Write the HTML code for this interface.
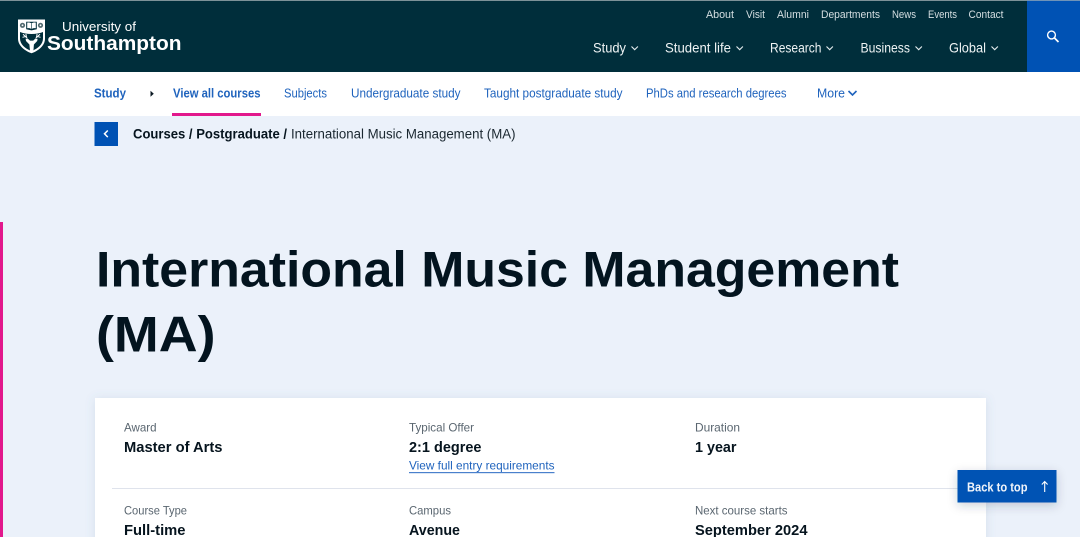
<!DOCTYPE html>
<html lang="en"><head><meta charset="utf-8"><title>International Music Management (MA)</title>
<style>
html,body{margin:0;padding:0;width:1080px;height:537px;overflow:hidden;background:#ebf1fa}
svg{display:block;position:absolute;left:0;top:0}
text{font-family:"Liberation Sans",Arial,sans-serif;white-space:pre}
.b{font-weight:700}
.tn{font-size:11px;fill:#d5dfe2}
.mn{font-size:14px;fill:#eef3f4}
.sn{font-size:12.5px;fill:#1f63bd}
.lb{font-size:12px;fill:#5a6670}
.vl{font-size:15px;font-weight:700;fill:#06141e}
</style></head><body>
<svg width="1080" height="537" viewBox="0 0 1080 537" xmlns="http://www.w3.org/2000/svg">
<defs><filter id="s" x="-20%" y="-20%" width="140%" height="140%"><feDropShadow dx="0" dy="1" stdDeviation="5" flood-color="#5a78a0" flood-opacity=".16"/></filter>
<filter id="s2" x="-30%" y="-50%" width="160%" height="200%"><feDropShadow dx="0" dy="3" stdDeviation="5" flood-color="#1a3050" flood-opacity=".22"/></filter></defs>
<rect width="1080" height="537" fill="#ebf1fa"/>
<!-- header -->
<rect width="1080" height="72" fill="#002e3b"/>
<rect width="1027" height="1" fill="#7d9298"/>
<rect x="1027" width="53" height="72" fill="#0052b4"/>
<rect x="1027" width="53" height="1" fill="#6f93b8"/>
<!-- logo: white shield -->
<path d="M18 19.500h27v19c0 7.200-6.500 12.200-13.500 14.800C24.500 50.700 18 45.700 18 38.500z" fill="#fff"/>
<!-- dark shield field under the chief -->
<path d="M20 32c3.200 1.400 7.200 2 11.500 2s8.300-.6 11.500-2v6.500c0 5.800-5 10-11.500 12.600C25 48.500 20 44.300 20 38.500z" fill="#002e3b"/>
<!-- stag -->
<path d="M30 51l-.6-6.500-3.400-3.500-.4-2.300 2.800.4 1.600 1.500h3.200l1.600-1.500 2.800-.4-.4 2.300-3.300 3.500-.4 5.500-1.700 1.600z" fill="#fff"/>
<path d="M27.500 38.500l-4.500-4.200M25.500 36.500l-3 .8M26.500 37.200l-.6-3.200M35.500 38.500l4.500-4.200M37.500 36.500l3 .8M36.500 37.200l.6-3.200" stroke="#fff" stroke-width="1" fill="none"/>
<!-- chief: book and roses -->
<path d="M26.200 21.800h10.600v7.500l-5.300 1.100-5.300-1.100z" fill="#002e3b"/>
<path d="M27.200 22.600c1.500-.3 3-.1 4.300.7c1.300-.8 2.800-1 4.300-.7v5.700c-1.500-.3-3-.1-4.300.7c-1.300-.8-2.800-1-4.300-.7z" fill="#fff"/>
<path d="M31.500 23.300v5.700" stroke="#002e3b" stroke-width=".6"/>
<circle cx="22.500" cy="25.300" r="2.600" fill="#50696f"/><circle cx="40.500" cy="25.300" r="2.600" fill="#50696f"/>
<circle cx="22.500" cy="25.300" r=".9" fill="#fff"/><circle cx="40.500" cy="25.300" r=".9" fill="#fff"/>
<text x="62" y="31" font-size="13" fill="#fff" textLength="74" lengthAdjust="spacingAndGlyphs">University of</text>
<text x="47" y="50" font-size="20" class="b" fill="#fff" textLength="134.500" lengthAdjust="spacingAndGlyphs">Southampton</text>
<!-- top nav -->
<text class="tn" x="706" y="18" textLength="28" lengthAdjust="spacingAndGlyphs">About</text>
<text class="tn" x="746" y="18" textLength="19" lengthAdjust="spacingAndGlyphs">Visit</text>
<text class="tn" x="777" y="18" textLength="32" lengthAdjust="spacingAndGlyphs">Alumni</text>
<text class="tn" x="821" y="18" textLength="59" lengthAdjust="spacingAndGlyphs">Departments</text>
<text class="tn" x="892" y="18" textLength="24" lengthAdjust="spacingAndGlyphs">News</text>
<text class="tn" x="928" y="18" textLength="29" lengthAdjust="spacingAndGlyphs">Events</text>
<text class="tn" x="968.500" y="18" textLength="35" lengthAdjust="spacingAndGlyphs">Contact</text>
<!-- main nav -->
<text class="mn" x="593" y="52.500" textLength="33" lengthAdjust="spacingAndGlyphs">Study</text>
<text class="mn" x="665" y="52.500" textLength="66" lengthAdjust="spacingAndGlyphs">Student life</text>
<text class="mn" x="770" y="52.500" textLength="51.500" lengthAdjust="spacingAndGlyphs">Research</text>
<text class="mn" x="860.500" y="52.500" textLength="49.500" lengthAdjust="spacingAndGlyphs">Business</text>
<text class="mn" x="949" y="52.500" textLength="37" lengthAdjust="spacingAndGlyphs">Global</text>
<g fill="none" stroke="#e4ecee" stroke-width="1.100">
<path d="M631.500 46.500l3.200 3.200 3.200-3.200"/><path d="M736.500 46.500l3.200 3.200 3.200-3.200"/><path d="M826.500 46.500l3.200 3.200 3.200-3.200"/><path d="M915.500 46.500l3.200 3.200 3.200-3.200"/><path d="M991.500 46.500l3.200 3.200 3.200-3.200"/>
</g>
<!-- search -->
<circle cx="1051.500" cy="35" r="3.900" fill="none" stroke="#fff" stroke-width="1.400"/>
<path d="M1054.500 38l4 4" stroke="#fff" stroke-width="1.700"/>
<!-- sub nav -->
<rect y="72" width="1080" height="44" fill="#fff"/>
<text class="sn b" x="94" y="97.500" textLength="32" lengthAdjust="spacingAndGlyphs" fill="#0f56b3">Study</text>
<path d="M150.500 90.800l3.300 3-3.300 3z" fill="#0c1a24"/>
<text class="sn b" x="173" y="97.500" textLength="87.500" lengthAdjust="spacingAndGlyphs">View all courses</text>
<rect x="172" y="113" width="89" height="3" fill="#e2188c"/>
<text class="sn" x="284" y="97.500" textLength="43" lengthAdjust="spacingAndGlyphs">Subjects</text>
<text class="sn" x="351" y="97.500" textLength="109.500" lengthAdjust="spacingAndGlyphs">Undergraduate study</text>
<text class="sn" x="484" y="97.500" textLength="138.500" lengthAdjust="spacingAndGlyphs">Taught postgraduate study</text>
<text class="sn" x="646" y="97.500" textLength="140.500" lengthAdjust="spacingAndGlyphs">PhDs and research degrees</text>
<text class="sn" x="817" y="97.500" textLength="28" lengthAdjust="spacingAndGlyphs">More</text>
<path d="M848.500 91l4 4 4-4" fill="none" stroke="#1f63bd" stroke-width="1.600"/>
<!-- breadcrumb -->
<rect x="94.500" y="122" width="23.500" height="24" fill="#0052b4"/>
<path d="M107.800 130.500l-3.300 3.300 3.300 3.300" fill="none" stroke="#fff" stroke-width="1.500"/>
<text x="133" y="138.500" font-size="13.500" class="b" fill="#06141e" textLength="154" lengthAdjust="spacingAndGlyphs">Courses / Postgraduate /</text>
<text x="291" y="138.500" font-size="13.500" fill="#1a2730" textLength="224.500" lengthAdjust="spacingAndGlyphs">International Music Management (MA)</text>
<!-- hero -->
<path d="M0 222h3v315H0z" fill="#e2188c"/>
<text x="96" y="286.500" font-size="50" class="b" fill="#03141f" textLength="803" lengthAdjust="spacingAndGlyphs">International Music Management</text>
<text x="96" y="351.500" font-size="50" class="b" fill="#03141f" textLength="119.500" lengthAdjust="spacingAndGlyphs">(MA)</text>
<!-- card -->
<rect x="95" y="398" width="891" height="160" fill="#fff" filter="url(#s)"/>
<rect x="112" y="488" width="874" height="1" fill="#dfe3ec"/>
<text class="lb" x="124" y="431.500" textLength="32.500" lengthAdjust="spacingAndGlyphs">Award</text>
<text class="vl" x="124" y="452" textLength="98.500" lengthAdjust="spacingAndGlyphs">Master of Arts</text>
<text class="lb" x="409" y="431.500" textLength="65" lengthAdjust="spacingAndGlyphs">Typical Offer</text>
<text class="vl" x="409" y="452" textLength="72.500" lengthAdjust="spacingAndGlyphs">2:1 degree</text>
<text x="409" y="469.500" font-size="12" fill="#1f63bd" textLength="145.500" lengthAdjust="spacingAndGlyphs">View full entry requirements</text>
<rect x="409" y="472" width="145.500" height="1.200" fill="#4a80cc"/>
<text class="lb" x="695" y="431.500" textLength="45" lengthAdjust="spacingAndGlyphs">Duration</text>
<text class="vl" x="695" y="452" textLength="41.500" lengthAdjust="spacingAndGlyphs">1 year</text>
<text class="lb" x="124" y="514.500" textLength="63" lengthAdjust="spacingAndGlyphs">Course Type</text>
<text class="vl" x="124" y="535" textLength="61.500" lengthAdjust="spacingAndGlyphs">Full-time</text>
<text class="lb" x="409" y="514.500" textLength="42" lengthAdjust="spacingAndGlyphs">Campus</text>
<text class="vl" x="409" y="535" textLength="51" lengthAdjust="spacingAndGlyphs">Avenue</text>
<text class="lb" x="695" y="514.500" textLength="92.500" lengthAdjust="spacingAndGlyphs">Next course starts</text>
<text class="vl" x="695" y="535" textLength="112.500" lengthAdjust="spacingAndGlyphs">September 2024</text>
<!-- back to top -->
<rect x="957.500" y="470" width="99" height="32.500" fill="#0052b4" filter="url(#s2)"/>
<text x="967" y="491.500" font-size="12.500" class="b" fill="#f0f4fa" textLength="60.500" lengthAdjust="spacingAndGlyphs">Back to top</text>
<path d="M1044.700 492v-10.500M1041.800 484.500l2.900-3 2.900 3" fill="none" stroke="#fff" stroke-width="1.100"/>
</svg>
</body></html>
